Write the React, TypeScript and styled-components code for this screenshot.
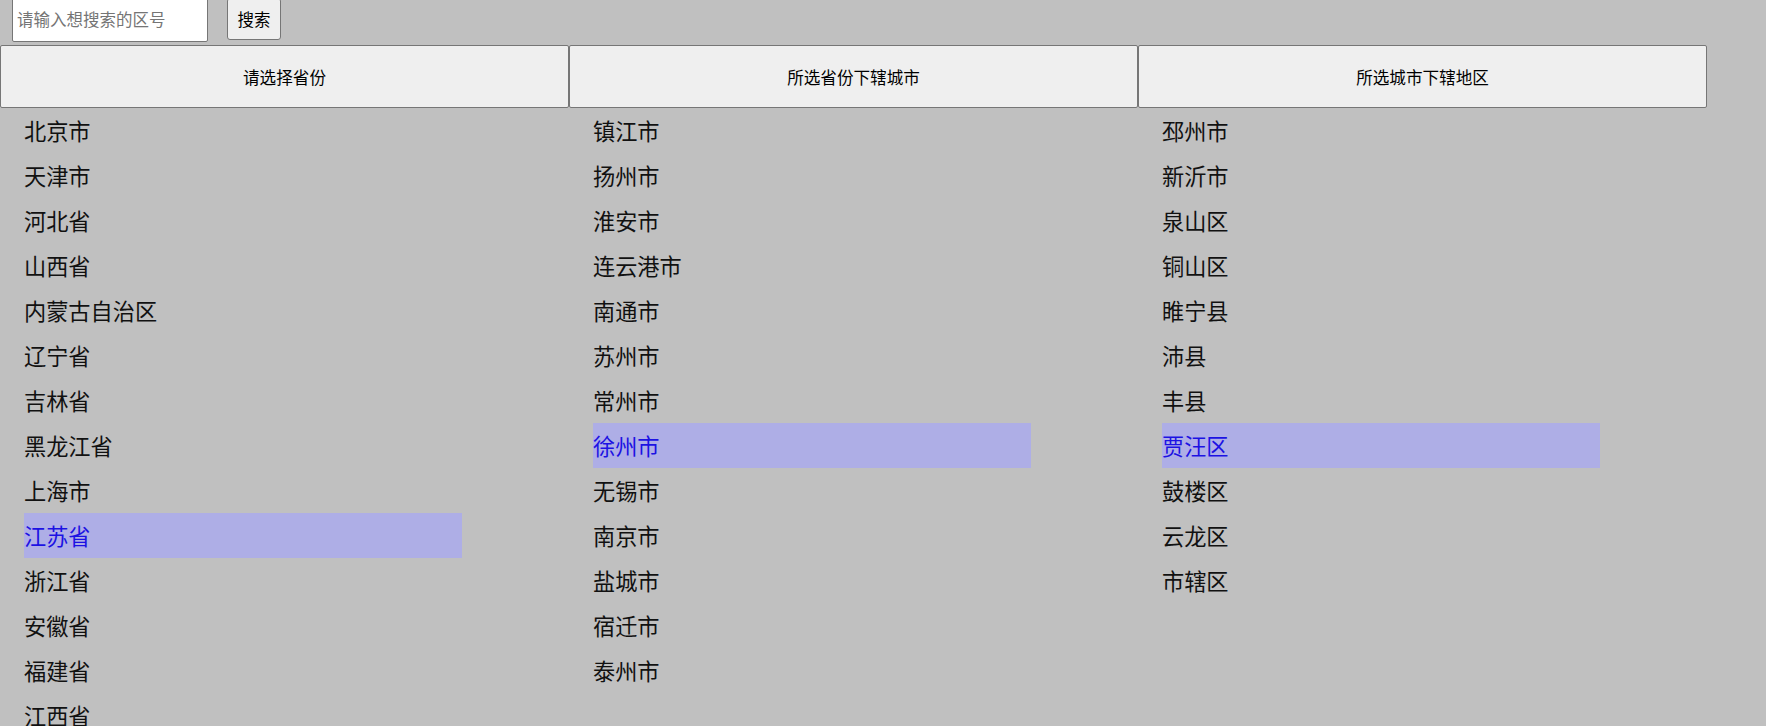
import React, { useState } from "react";
import styled, { createGlobalStyle } from "styled-components";

const GlobalStyle = createGlobalStyle`
  html, body {
    margin: 0;
    padding: 0;
    background: #c0c0c0;
    overflow: hidden;
  }
  body {
    font-family: "Noto Sans CJK SC", "Noto Sans", sans-serif;
    color: #111;
  }
`;

const Page = styled.div`
  display: flex;
  flex-direction: column;
  width: 1766px;
  height: 726px;
  overflow: hidden;
`;

const SearchBar = styled.div`
  display: flex;
  align-items: center;
  gap: 19px;
  height: 47px;
  margin-top: -5px;
  padding-left: 12px;
`;

const SearchInput = styled.input`
  box-sizing: border-box;
  width: 196px;
  height: 47px;
  padding: 0 0 0 4px;
  border: 1px solid #767676;
  border-radius: 2px;
  background: #fff;
  font-family: inherit;
  font-size: 16.5px;
  color: #000;
  outline: none;
  &::placeholder {
    color: #757575;
  }
`;

const SearchButton = styled.button`
  box-sizing: border-box;
  width: 54px;
  height: 42px;
  padding: 0;
  border: 1px solid #767676;
  border-radius: 3px;
  background: #efefef;
  font-family: inherit;
  font-size: 16.5px;
  color: #000;
`;

const HeaderRow = styled.div`
  display: flex;
  margin-top: 3px;
`;

const HeaderButton = styled.button`
  box-sizing: border-box;
  width: 569px;
  height: 63px;
  padding: 0;
  border: 1px solid #767676;
  border-radius: 2px;
  background: #efefef;
  font-family: inherit;
  font-size: 16.6px;
  color: #000;
`;

const Columns = styled.div`
  display: flex;
`;

const List = styled.ul`
  box-sizing: border-box;
  width: 569px;
  margin: 0;
  padding: 0 0 0 24px;
  list-style: none;
`;

const Item = styled.li<{ $active?: boolean }>`
  width: 438px;
  height: 45px;
  line-height: 45px;
  font-size: 22.2px;
  white-space: nowrap;
  color: ${(p) => (p.$active ? "#1c12e3" : "#111")};
  background: ${(p) => (p.$active ? "#aeaee6" : "transparent")};
  cursor: pointer;
`;

const provinces = [
  "北京市", "天津市", "河北省", "山西省", "内蒙古自治区", "辽宁省", "吉林省",
  "黑龙江省", "上海市", "江苏省", "浙江省", "安徽省", "福建省", "江西省",
  "山东省", "河南省",
];

const cities = [
  "镇江市", "扬州市", "淮安市", "连云港市", "南通市", "苏州市", "常州市",
  "徐州市", "无锡市", "南京市", "盐城市", "宿迁市", "泰州市",
];

const districts = [
  "邳州市", "新沂市", "泉山区", "铜山区", "睢宁县", "沛县", "丰县",
  "贾汪区", "鼓楼区", "云龙区", "市辖区",
];

export default function App() {
  const [province, setProvince] = useState("江苏省");
  const [city, setCity] = useState("徐州市");
  const [district, setDistrict] = useState("贾汪区");

  return (
    <Page>
      <GlobalStyle />
      <SearchBar>
        <SearchInput placeholder="请输入想搜索的区号" />
        <SearchButton>搜索</SearchButton>
      </SearchBar>
      <HeaderRow>
        <HeaderButton>请选择省份</HeaderButton>
        <HeaderButton>所选省份下辖城市</HeaderButton>
        <HeaderButton>所选城市下辖地区</HeaderButton>
      </HeaderRow>
      <Columns>
        <List>
          {provinces.map((p) => (
            <Item key={p} $active={p === province} onClick={() => setProvince(p)}>
              {p}
            </Item>
          ))}
        </List>
        <List>
          {cities.map((c) => (
            <Item key={c} $active={c === city} onClick={() => setCity(c)}>
              {c}
            </Item>
          ))}
        </List>
        <List>
          {districts.map((d) => (
            <Item key={d} $active={d === district} onClick={() => setDistrict(d)}>
              {d}
            </Item>
          ))}
        </List>
      </Columns>
    </Page>
  );
}
